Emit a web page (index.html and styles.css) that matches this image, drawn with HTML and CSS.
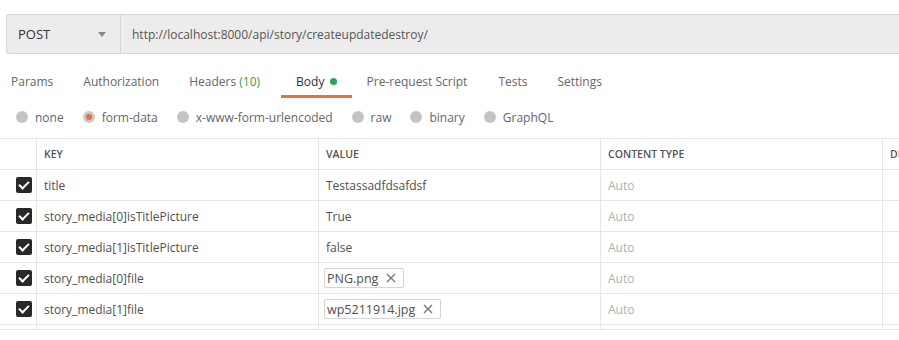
FILE: index.html
```html
<!DOCTYPE html>
<html lang="en">
  <head>
    <meta charset="UTF-8" />
    <title>Request</title>
    <link rel="stylesheet" href="styles.css">
  </head>
  <body>
    <div class="url-bar">
      <div class="method">
        <span>POST</span>
        <span class="caret"></span>
      </div>
      <div class="url">http://localhost:8000/api/story/createupdatedestroy/</div>
    </div>

    <div class="tabs">
      <div class="tab">Params</div>
      <div class="tab">Authorization</div>
      <div class="tab">Headers <span class="count">(10)</span></div>
      <div class="tab active">Body <span class="dot"></span></div>
      <div class="tab">Pre-request Script</div>
      <div class="tab">Tests</div>
      <div class="tab">Settings</div>
    </div>

    <div class="body-types">
      <label><span class="radio"></span>none</label>
      <label><span class="radio on"></span>form-data</label>
      <label><span class="radio"></span>x-www-form-urlencoded</label>
      <label><span class="radio"></span>raw</label>
      <label><span class="radio"></span>binary</label>
      <label><span class="radio"></span>GraphQL</label>
    </div>

    <div class="params">
      <div class="row head">
        <div class="cell check"></div>
        <div class="cell">KEY</div>
        <div class="cell">VALUE</div>
        <div class="cell">CONTENT TYPE</div>
        <div class="cell">DE</div>
      </div>
      <div class="row">
        <div class="cell check"><span class="box"></span></div>
        <div class="cell">title</div>
        <div class="cell">Testassadfdsafdsf</div>
        <div class="cell muted">Auto</div>
        <div class="cell"></div>
      </div>
      <div class="row">
        <div class="cell check"><span class="box"></span></div>
        <div class="cell">story_media[0]isTitlePicture</div>
        <div class="cell">True</div>
        <div class="cell muted">Auto</div>
        <div class="cell"></div>
      </div>
      <div class="row">
        <div class="cell check"><span class="box"></span></div>
        <div class="cell">story_media[1]isTitlePicture</div>
        <div class="cell">false</div>
        <div class="cell muted">Auto</div>
        <div class="cell"></div>
      </div>
      <div class="row">
        <div class="cell check"><span class="box"></span></div>
        <div class="cell">story_media[0]file</div>
        <div class="cell file-cell">
          <span class="file">PNG.png
            <svg class="x" width="10" height="10" viewBox="0 0 10 10"><path d="M1 1L9 9M9 1L1 9" stroke="#777" stroke-width="1.4"/></svg>
          </span>
        </div>
        <div class="cell muted">Auto</div>
        <div class="cell"></div>
      </div>
      <div class="row">
        <div class="cell check"><span class="box"></span></div>
        <div class="cell">story_media[1]file</div>
        <div class="cell file-cell">
          <span class="file">wp5211914.jpg
            <svg class="x" width="10" height="10" viewBox="0 0 10 10"><path d="M1 1L9 9M9 1L1 9" stroke="#777" stroke-width="1.4"/></svg>
          </span>
        </div>
        <div class="cell muted">Auto</div>
        <div class="cell"></div>
      </div>
      <div class="row last">
        <div class="cell check"></div>
        <div class="cell"></div>
        <div class="cell"></div>
        <div class="cell"></div>
        <div class="cell"></div>
      </div>
    </div>
  </body>
</html>
```

FILE: styles.css
```css
body {
  margin: 0;
  font-family: "Open Sans", sans-serif;
  font-size: 12px;
  color: #505050;
  background: #fff;
  width: 899px;
  height: 340px;
  overflow: hidden;
}

.url-bar {
  display: flex;
  margin: 14px 0 0 6px;
  height: 38px;
  background: #ececec;
  border: 1px solid #d6d6d6;
  border-right: none;
  border-radius: 3px 0 0 3px;
}

.method {
  width: 114px;
  box-sizing: border-box;
  display: flex;
  align-items: center;
  justify-content: space-between;
  padding: 0 14px 0 11px;
  border-right: 1px solid #d6d6d6;
  font-size: 13px;
  color: #333;
}

.caret {
  width: 0;
  height: 0;
  border-left: 4px solid transparent;
  border-right: 4px solid transparent;
  border-top: 5px solid #888;
}

.url {
  display: flex;
  align-items: center;
  padding-left: 11px;
  color: #555;
}

.tabs {
  display: flex;
  margin-top: 16px;
  padding-left: 11px;
  height: 28px;
}

.tab {
  margin-right: 30px;
  color: #666;
  font-size: 12px;
  line-height: 24px;
  position: relative;
}

.tab:nth-child(3) {
  margin-right: 36px;
}

.tab.active {
  color: #333;
  margin-right: 30px;
}

.tab.active::after {
  content: "";
  position: absolute;
  left: -15px;
  right: -15px;
  bottom: 0;
  height: 3px;
  background: #e8703f;
}

.tab:nth-child(5) {
  margin-right: 31px;
}

.count {
  color: #3a9b49;
}

.dot {
  display: inline-block;
  width: 7px;
  height: 7px;
  border-radius: 50%;
  background: #26a556;
  margin-left: 2px;
  vertical-align: 1px;
}

.body-types {
  display: flex;
  padding-left: 16px;
  margin-top: 6px;
  height: 26px;
  align-items: center;
}

.body-types label {
  display: flex;
  align-items: center;
  margin-right: 19px;
  color: #666;
  font-size: 12px;
}

.radio {
  width: 12px;
  height: 12px;
  border-radius: 50%;
  background: #c4c4c4;
  margin-right: 7px;
  box-sizing: border-box;
}

.radio.on {
  background: #e8703f;
  border: 3px solid #c9c9c9;
}

.params {
  margin-top: 8px;
  border-top: 1px solid #e6e6e6;
}

.row {
  display: grid;
  grid-template-columns: 36px 282px 282px 282px 1fr;
  height: 31px;
  border-bottom: 1px solid #e6e6e6;
  box-sizing: border-box;
}

.row.last {
  height: 5px;
}

.cell {
  border-left: 1px solid #e6e6e6;
  display: flex;
  align-items: center;
  padding-left: 7px;
  white-space: nowrap;
  overflow: hidden;
}

.cell.check {
  border-left: none;
  padding-left: 16px;
}

.head .cell {
  font-size: 10.5px;
  font-weight: 600;
  color: #555;
}

.muted {
  color: #b0b0b0;
}

.box {
  width: 16px;
  height: 16px;
  border-radius: 2px;
  background: #282828;
  position: relative;
}

.box::after {
  content: "";
  position: absolute;
  left: 5px;
  top: 2px;
  width: 4px;
  height: 8px;
  border: solid #fff;
  border-width: 0 2px 2px 0;
  transform: rotate(45deg);
}

.file-cell {
  padding-left: 5px;
}

.file {
  display: flex;
  align-items: center;
  height: 20px;
  box-sizing: border-box;
  border: 1px solid #d4d4d4;
  border-radius: 2px;
  padding: 0 7px 0 2px;
  color: #505050;
  font-size: 12.5px;
}

.x {
  margin-left: 8px;
}
```
